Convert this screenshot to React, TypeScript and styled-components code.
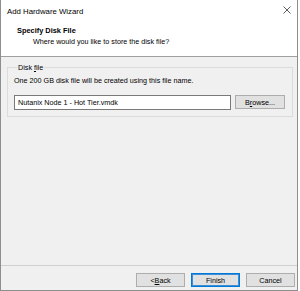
import React from 'react'
import styled, { createGlobalStyle } from 'styled-components'

const GlobalStyle = createGlobalStyle`
  html, body {
    margin: 0;
    padding: 0;
    background: #ffffff;
  }
  * {
    box-sizing: border-box;
  }
`

const Window = styled.div`
  width: 298px;
  height: 291px;
  display: flex;
  flex-direction: column;
  border-left: 1px solid #8e8e8e;
  border-right: 1px solid #8e8e8e;
  border-bottom: 1px solid #8e8e8e;
  font-family: "Liberation Sans", Arial, sans-serif;
  color: #000;
  background: #f0f0f0;
`

const Top = styled.div`
  height: 57px;
  background: #fff;
  border-bottom: 1px solid #a0a0a0;
  flex-shrink: 0;
`

const TitleBar = styled.div`
  height: 22px;
  display: flex;
  align-items: center;
  justify-content: space-between;
  padding: 0 5px 0 6px;
  font-size: 7.8px;
`

const Close = styled.span`
  display: flex;
  width: 10px;
  height: 10px;
  align-items: center;
  justify-content: center;
  margin-top: -2px;
`

const Header = styled.div`
  padding: 4px 0 0 16px;
`

const Heading = styled.div`
  font-weight: bold;
  font-size: 7.4px;
  line-height: 10px;
`

const SubHeading = styled.div`
  font-size: 7.2px;
  line-height: 10px;
  padding-left: 16px;
  margin-top: 1px;
`

const Body = styled.div`
  flex: 1;
  padding: 6px 4px 0 6px;
`

const Group = styled.fieldset`
  margin: 0;
  padding: 4px 7px 6px 6px;
  border: 1px solid #dcdcdc;
  min-width: 0;
  font-size: 7.2px;
`

const Legend = styled.legend`
  padding: 0 1px;
  margin-left: 3px;
  line-height: 9px;
`

const Hint = styled.div`
  line-height: 9px;
`

const Row = styled.div`
  display: flex;
  align-items: flex-start;
  gap: 4px;
  margin-top: 10px;
`

const Field = styled.div`
  flex: 1;
  height: 15px;
  background: #fff;
  border: 1px solid #7a7a7a;
  padding: 0 3px;
  display: flex;
  align-items: center;
  font-size: 7.2px;
`

const Footer = styled.div`
  height: 25px;
  border-top: 1px solid #d0d0d0;
  display: flex;
  justify-content: flex-end;
  gap: 6px;
  padding: 7px 2px 0 0;
  flex-shrink: 0;
`

const Button = styled.div<{ $primary?: boolean; $width?: number }>`
  width: ${(p) => p.$width ?? 49}px;
  height: 14px;
  background: #e1e1e1;
  border: 1px solid ${(p) => (p.$primary ? '#0078d7' : '#adadad')};
  box-shadow: ${(p) => (p.$primary ? 'inset 0 0 0 1px #3d8fd6' : 'none')};
  display: flex;
  align-items: center;
  justify-content: center;
  font-size: 7.2px;
`

const Key = styled.span`
  text-decoration: underline;
  text-underline-offset: 1px;
`

export default function App() {
  return (
    <>
      <GlobalStyle />
      <Window>
        <Top>
          <TitleBar>
            <span>Add Hardware Wizard</span>
            <Close>
              <svg width="8" height="8" viewBox="0 0 8 8">
                <path d="M0.5 0.5 L7.5 7.5 M7.5 0.5 L0.5 7.5" stroke="#333" strokeWidth="0.8" />
              </svg>
            </Close>
          </TitleBar>
          <Header>
            <Heading>Specify Disk File</Heading>
            <SubHeading>Where would you like to store the disk file?</SubHeading>
          </Header>
        </Top>
        <Body>
          <Group>
            <Legend>
              Disk <Key>f</Key>ile
            </Legend>
            <Hint>One 200 GB disk file will be created using this file name.</Hint>
            <Row>
              <Field>Nutanix Node 1 - Hot Tier.vmdk</Field>
              <Button $width={50}>
                B<Key>r</Key>owse...
              </Button>
            </Row>
          </Group>
        </Body>
        <Footer>
          <Button>
            &lt; <Key>B</Key>ack
          </Button>
          <Button $primary>Finish</Button>
          <Button>Cancel</Button>
        </Footer>
      </Window>
    </>
  )
}
